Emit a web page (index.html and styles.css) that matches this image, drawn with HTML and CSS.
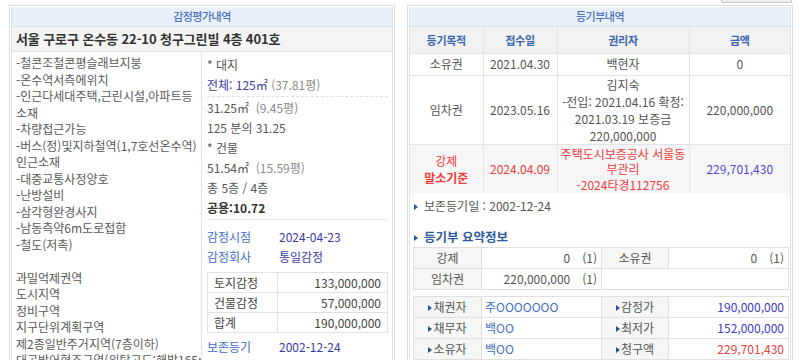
FILE: index.html
```html
<!DOCTYPE html>
<html lang="ko">
<head>
<meta charset="utf-8">
<title>감정평가내역 / 등기부내역</title>
<link rel="stylesheet" href="styles.css">
</head>
<body>
<div class="topbar"><div class="btn-edge"></div></div>
<div class="page">
  <section class="panel">
    <div class="box">
      <div class="hd">감정평가내역</div>
      <div class="addr">서울 구로구 온수동 22-10 청구그린빌 4층 401호</div>
      <div class="appr">
        <div class="desc">
          <div>-철콘조철콘평슬래브지붕</div>
          <div>-온수역서측에위치</div>
          <div>-인근다세대주택,근린시설,아파트등</div>
          <div>소재</div>
          <div>-차량접근가능</div>
          <div>-버스(정)및지하철역(1,7호선온수역)</div>
          <div>인근소재</div>
          <div>-대중교통사정양호</div>
          <div>-난방설비</div>
          <div>-삼각형완경사지</div>
          <div>-남동측약6m도로접함</div>
          <div>-철도(저촉)</div>
          <div class="blank"></div>
          <div>과밀억제권역</div>
          <div>도시지역</div>
          <div>정비구역</div>
          <div>지구단위계획구역</div>
          <div>제2종일반주거지역(7층이하)</div>
          <div>대공방어협조구역(위탁고도:해발165m)</div>
        </div>
        <div class="facts">
          <div class="f">* 대지</div>
          <div class="f"><span class="navy">전체: 125㎡</span> <span class="muted">(37.81평)</span></div>
          <div class="sep-dash"></div>
          <div class="f">31.25㎡ &nbsp;<span class="muted">(9.45평)</span></div>
          <div class="f">125 분의 31.25</div>
          <div class="f">* 건물</div>
          <div class="f">51.54㎡ &nbsp;<span class="muted">(15.59평)</span></div>
          <div class="f">총 5층 / 4층</div>
          <div class="f strong">공용:10.72</div>
          <div class="sep"></div>
          <div class="kv first"><span class="k">감정시점</span><span class="v">2024-04-23</span></div>
          <div class="kv"><span class="k">감정회사</span><span class="v">통일감정</span></div>
          <table class="amt">
            <tr><td class="al">토지감정</td><td class="ar">133,000,000</td></tr>
            <tr><td class="al">건물감정</td><td class="ar">57,000,000</td></tr>
            <tr><td class="al">합계</td><td class="ar">190,000,000</td></tr>
          </table>
          <div class="kv last"><span class="k">보존등기</span><span class="v">2002-12-24</span></div>
        </div>
      </div>
    </div>
  </section>

  <section class="panel">
    <div class="box">
      <div class="hd">등기부내역</div>
      <table class="reg">
        <colgroup><col class="c1"><col class="c2"><col class="c3"><col class="c4"></colgroup>
        <tr class="th"><th>등기목적</th><th>접수일</th><th>권리자</th><th>금액</th></tr>
        <tr class="r1"><td>소유권</td><td>2021.04.30</td><td>백현자</td><td>0</td></tr>
        <tr class="r2"><td>임차권</td><td>2023.05.16</td><td>김지숙<br>-전입: 2021.04.16 확정:<br>2021.03.19 보증금<br>220,000,000</td><td>220,000,000</td></tr>
        <tr class="r3"><td class="red"><span class="l17">강제</span><br><b class="l17">말소기준</b></td><td class="red">2024.04.09</td><td class="red">주택도시보증공사 서울동<br>부관리<br>-2024타경112756</td><td class="blue">229,701,430</td></tr>
      </table>
      <p class="note"><span class="tri"></span>보존등기일 : 2002-12-24</p>
      <h3 class="sub"><span class="tri"></span>등기부 요약정보</h3>
      <table class="sum">
        <colgroup><col class="s1"><col class="s2"><col class="s3"><col class="s4"></colgroup>
        <tr><td class="lb">강제</td><td class="num">0<span class="cnt">(1)</span></td><td class="lb">소유권</td><td class="num">0<span class="cnt">(1)</span></td></tr>
        <tr><td class="lb">임차권</td><td class="num">220,000,000<span class="cnt">(1)</span></td><td colspan="2"></td></tr>
      </table>
      <table class="sum sum2">
        <colgroup><col class="s1"><col class="s2"><col class="s3"><col class="s4"></colgroup>
        <tr><td class="lb"><span class="tri sm"></span>채권자</td><td class="txt">주OOOOOOO</td><td class="lb"><span class="tri sm"></span>감정가</td><td class="val">190,000,000</td></tr>
        <tr><td class="lb"><span class="tri sm"></span>채무자</td><td class="txt">백OO</td><td class="lb"><span class="tri sm"></span>최저가</td><td class="val">152,000,000</td></tr>
        <tr><td class="lb"><span class="tri sm"></span>소유자</td><td class="txt">백OO</td><td class="lb"><span class="tri sm"></span>청구액</td><td class="val redv">229,701,430</td></tr>
        <tr><td class="lb"></td><td></td><td class="lb"></td><td></td></tr>
      </table>
    </div>
  </section>
</div>
</body>
</html>
```

FILE: styles.css
```css
* { box-sizing: border-box; }
html, body { margin: 0; padding: 0; }
body {
  width: 800px;
  height: 360px;
  overflow: hidden;
  background: #fff;
  font-family: "Noto Sans CJK KR", "Noto Sans", sans-serif;
  font-size: 12px;
  color: #555;
}

.topbar {
  height: 5px;
  display: flex;
  justify-content: flex-end;
  padding-right: 8px;
}
.btn-edge {
  width: 71px;
  height: 3px;
  background: #efefef;
  border: 1px solid #c4c4c4;
  border-top: none;
  border-radius: 0 0 2px 2px;
}

.page {
  display: flex;
  gap: 12px;
  padding-left: 9px;
}
.panel {
  width: 386px;
  height: 420px;
  border: 1px solid #dcdcdc;
  padding: 1px;
}
.box {
  height: 100%;
  border: 1px solid #e3e3e3;
  border-top: none;
}

.hd {
  height: 20px;
  line-height: 19px;
  background: #e7f0fb;
  border-bottom: 1px solid #d6e1ef;
  text-align: center;
  color: #4a72b4;
  font-size: 11px;
  font-weight: 500;
  letter-spacing: -0.5px;
}

.addr {
  height: 25px;
  line-height: 24px;
  background: #f4f4f4;
  border-bottom: 1px solid #e3e3e3;
  padding-left: 4px;
  font-size: 13px;
  font-weight: bold;
  color: #333;
  letter-spacing: -0.1px;
  white-space: nowrap;
}

.appr { display: flex; }
.desc {
  width: 190px;
  flex: none;
  border-right: 1px solid #e3e3e3;
  padding: 3px 0 0 4px;
  line-height: 16.5px;
  white-space: nowrap;
  overflow: hidden;
  letter-spacing: 0;
  color: #595959;
}
.desc .blank { height: 16.5px; }

.facts {
  flex: 1;
  padding: 3px 4px 0 5px;
}
.f { height: 20px; line-height: 20px; white-space: nowrap; }
.navy { color: #3a3aa8; }
.muted { color: #8a8a8a; }
.strong { font-weight: bold; color: #333; }
.sep-dash { border-top: 1px dashed #dedede; margin: 1px 0 1px; }
.sep { border-top: 1px solid #e6e6e6; margin-top: 1px; }

.kv { display: flex; height: 20px; line-height: 20px; }
.kv.first { margin-top: 7px; }
.kv.last { margin-top: 4px; }
.kv .k { width: 72px; color: #3f6cd0; }
.kv .v { color: #3a3aa8; }

.amt {
  width: 100%;
  margin-top: 5px;
  border-collapse: collapse;
  border: 1px solid #e3e3e3;
}
.amt td {
  border: 1px solid #e3e3e3;
  height: 20px;
  line-height: 19px;
  padding: 0 6px;
  color: #444;
}
.amt .al { width: 70px; }
.amt .ar { text-align: right; }

/* register table */
.reg {
  width: 100%;
  border-collapse: collapse;
  border-style: hidden;
  table-layout: fixed;
}
.reg .c1 { width: 73px; }
.reg .c2 { width: 74px; }
.reg .c3 { width: 132px; }
.reg .c4 { width: auto; }
.reg th, .reg td {
  border: 1px solid #e3e3e3;
  text-align: center;
  padding: 0;
  font-weight: normal;
}
.reg .th th {
  height: 26px;
  background: #f2f2f2;
  color: #3a67b0;
  font-weight: bold;
  font-size: 11px;
  letter-spacing: -0.3px;
}
.reg .r1 td { height: 22px; line-height: 20px; }
.reg .r2 td { height: 68px; line-height: 17px; }
.reg .r3 td { height: 49px; line-height: 15.5px; background: #f6f6f6; }
.reg .r3 .l17 { line-height: 17px; }
.reg .red { color: #f23b3b; }
.reg .red b { font-weight: bold; }
.reg .blue { color: #4b4bd6; }

.note {
  margin: 3px 0 0;
  height: 20px;
  line-height: 20px;
  padding-left: 4px;
  color: #555;
}
.tri {
  display: inline-block;
  width: 0;
  height: 0;
  border-left: 4px solid #2a5496;
  border-top: 3px solid transparent;
  border-bottom: 3px solid transparent;
  margin-right: 6px;
  vertical-align: 1px;
}
.tri.sm { margin-right: 1px; }
.sub {
  margin: 11px 0 0;
  height: 20px;
  line-height: 20px;
  padding-left: 4px;
  font-size: 12.5px;
  font-weight: bold;
  color: #2d5a9c;
}

.sum {
  width: 375px;
  margin-left: 3px;
  border-collapse: collapse;
  border: 1px solid #dedede;
  table-layout: fixed;
}
.sum .s1 { width: 68px; }
.sum .s2 { width: 120px; }
.sum .s3 { width: 67px; }
.sum .s4 { width: 120px; }
.sum td {
  border: 1px solid #e0e0e0;
  height: 21px;
  line-height: 20px;
  padding: 0;
  white-space: nowrap;
}
.sum .lb { background: #f6f6f6; text-align: center; color: #555; }
.sum .num { text-align: right; padding-right: 4px; }
.sum .cnt { margin-left: 12px; }
.sum2 { margin-top: 6px; }
.sum .txt { padding-left: 3px; color: #3e70c4; }
.sum .val { text-align: right; padding-right: 4px; color: #3c3cc4; }
.sum .val.redv { color: #f33c3c; }
```
